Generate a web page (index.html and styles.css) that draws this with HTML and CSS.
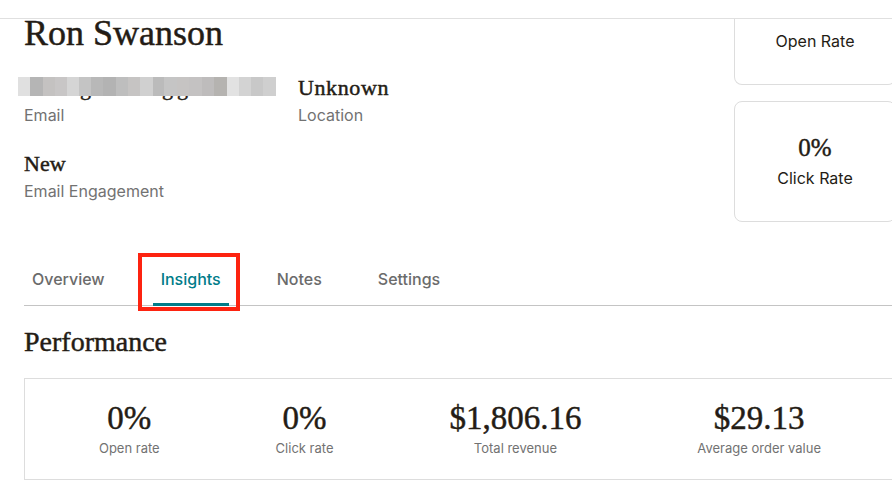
FILE: index.html
```html
<!DOCTYPE html>
<html lang="en">
<head>
<meta charset="utf-8">
<title>Ron Swanson</title>
<link rel="stylesheet" href="styles.css">
</head>
<body>
<div class="topbar"></div>
<main class="page">
  <section class="profile">
    <div class="info">
      <h1 class="name">Ron Swanson</h1>
      <div class="fields">
        <div class="field">
          <div class="value email-value"><span class="g1">g</span><span class="g2">g</span><span class="g3">g</span><div class="pixelate"></div></div>
          <div class="label">Email</div>
        </div>
        <div class="field">
          <div class="value value--wide">Unknown</div>
          <div class="label">Location</div>
        </div>
        <div class="field">
          <div class="value">New</div>
          <div class="label">Email Engagement</div>
        </div>
      </div>
    </div>
    <aside class="rate-cards">
      <div class="rate-card rate-card--cut">
        <div class="rate-label">Open Rate</div>
      </div>
      <div class="rate-card rate-card--full">
        <div class="rate-num">0%</div>
        <div class="rate-label">Click Rate</div>
      </div>
    </aside>
  </section>

  <nav class="tabs">
    <div class="tab">Overview</div>
    <div class="tab tab--active">Insights</div>
    <div class="tab">Notes</div>
    <div class="tab">Settings</div>
  </nav>

  <h2 class="section-title">Performance</h2>

  <div class="stats">
    <div class="stat">
      <div class="stat-num">0%</div>
      <div class="stat-label">Open rate</div>
    </div>
    <div class="stat">
      <div class="stat-num">0%</div>
      <div class="stat-label">Click rate</div>
    </div>
    <div class="stat">
      <div class="stat-num">$1,806.16</div>
      <div class="stat-label">Total revenue</div>
    </div>
    <div class="stat">
      <div class="stat-num">$29.13</div>
      <div class="stat-label">Average order value</div>
    </div>
  </div>
</main>
</body>
</html>
```
FILE: styles.css
```css
html, body {
  margin: 0;
  padding: 0;
  overflow: hidden;
  background: #ffffff;
}

body {
  font-family: "Inter", "Liberation Sans", sans-serif;
  color: #241c15;
  width: 892px;
  height: 499px;
}

.topbar {
  height: 18px;
  border-bottom: 1px solid #e0e0e0;
}

.page {
  padding-left: 24px;
  width: 872px;
}

.profile {
  display: flex;
  justify-content: space-between;
  align-items: flex-start;
}

.info {
  flex: 1;
}

.name,
.value,
.rate-num,
.section-title,
.stat-num {
  font-family: "Liberation Serif", serif;
  font-weight: normal;
  color: #241c15;
  -webkit-text-stroke: 0.45px #241c15;
}

.name {
  margin: 1px 0 0;
  font-size: 36px;
  line-height: 26px;
}

.fields {
  display: grid;
  grid-template-columns: 274px auto;
  row-gap: 23px;
  margin-top: 28px;
}

.value {
  font-size: 22px;
  line-height: 28px;
}

.value--wide {
  letter-spacing: 0.6px;
}

.label {
  margin-top: 1px;
  font-size: 16px;
  line-height: 24px;
  color: #727272;
}

.email-value {
  position: relative;
  display: flex;
}

.g1 { margin-left: 56px; }
.g2 { margin-left: 71px; }
.g3 { margin-left: 4px; }

.pixelate {
  position: absolute;
  left: -6px;
  top: 3px;
  width: 258px;
  height: 19px;
  background: linear-gradient(to right,
    #e0e0e0 0 12px,
    #b5b5b5 12px 25px,
    #c4c2c1 25px 37px,
    #c8c6c6 37px 49px,
    #d5d5d5 49px 61px,
    #c4c4c4 61px 73px,
    #b8b8b8 73px 85px,
    #b3b3b3 85px 98px,
    #bebebe 98px 110px,
    #c6c4c3 110px 122px,
    #d0d0d0 122px 135px,
    #bbbbbb 135px 146px,
    #c5c5c5 146px 159px,
    #c6c4c3 159px 171px,
    #c4c2c2 171px 184px,
    #bebcbc 184px 196px,
    #b5b3b0 196px 209px,
    #e2e2e2 209px 221px,
    #d3d3d3 221px 233px,
    #c8c8c8 233px 245px,
    #cfcfcf 245px 258px);
}

.rate-cards {
  width: 162px;
  display: flex;
  flex-direction: column;
  gap: 16px;
}

.rate-card {
  border: 1px solid #dddddd;
  text-align: center;
}

.rate-card--cut {
  border-top: 0;
  border-radius: 0 0 8px 8px;
  padding: 10px 0 31px;
}

.rate-card--full {
  border-radius: 8px;
  padding: 30px 0 31px;
}

.rate-num {
  font-size: 25px;
  line-height: 32px;
}

.rate-label {
  font-size: 16px;
  line-height: 24px;
  color: #241c15;
}

.rate-num + .rate-label {
  margin-top: 2px;
}

.tabs {
  display: flex;
  gap: 40px;
  margin-top: 45px;
  border-bottom: 1px solid #c4c4c4;
}

.tab {
  position: relative;
  padding: 0 8px 12px;
  font-size: 16px;
  line-height: 24px;
  font-weight: 500;
  color: #6b6b6b;
  border-bottom: 3px solid transparent;
  margin-bottom: -1px;
}

.tab--active {
  color: #007c89;
  border-bottom-color: #007c89;
}

.tab--active::after {
  content: "";
  position: absolute;
  top: -14px;
  left: -15px;
  right: -11px;
  bottom: -8px;
  border: 4px solid #fd2310;
  box-sizing: border-box;
}

.section-title {
  margin: 20px 0 0;
  font-size: 28px;
  line-height: 32px;
}

.stats {
  margin-top: 20px;
  border: 1px solid #dddddd;
  padding: 21px 16px 21px;
  display: flex;
  justify-content: space-around;
}

.stat {
  text-align: center;
}

.stat-num {
  font-size: 33px;
  line-height: 36px;
}

.stat-label {
  margin-top: 2px;
  font-size: 13px;
  line-height: 20px;
  color: #727272;
}
```
